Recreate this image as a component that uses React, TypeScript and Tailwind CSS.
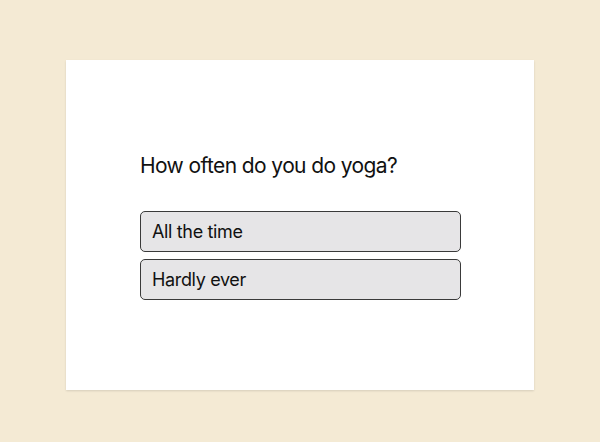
import React from 'react'

const options = ['All the time', 'Hardly ever']

const App = () => {
    return (
        <div className="w-[600px] h-[442px] bg-[#f4ead4] pt-[60px] pl-[66px]" style={{ fontFamily: 'Inter, "Noto Sans", sans-serif' }}>
            <div className="w-[468px] h-[330px] bg-white shadow-[0_1px_2px_rgba(0,0,0,0.12)] pt-[92px] pl-[74px]">
                <h1 className="text-[21px] leading-[28px] text-[#111] tracking-[-0.6px]">How often do you do yoga?</h1>
                <div className="mt-[31px] flex flex-col gap-[7px] w-[321px]">
                    {options.map(option => (
                        <button
                            key={option}
                            className="h-[41px] text-left pl-[11px] text-[18px] text-[#111] bg-[#e6e5e7] border border-[#3a3a3a] rounded-[5px] tracking-[-0.35px]"
                        >
                            {option}
                        </button>
                    ))}
                </div>
            </div>
        </div>
    )
}

export default App
